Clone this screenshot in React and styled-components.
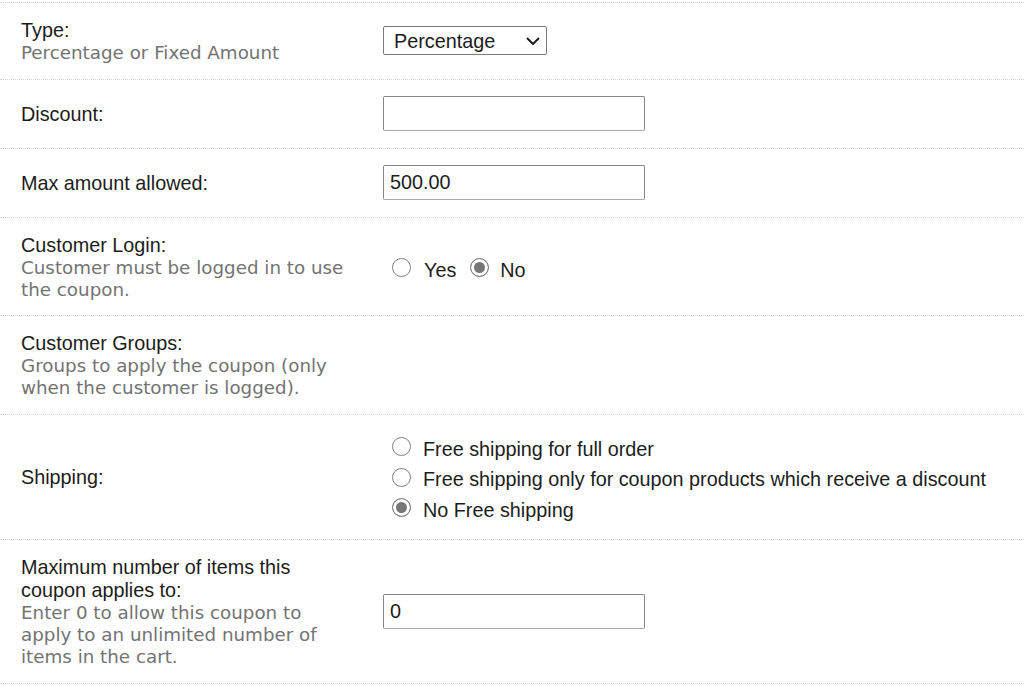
import React, { useState } from "react";
import styled, { createGlobalStyle } from "styled-components";

const GlobalStyle = createGlobalStyle`
  body {
    margin: 0;
    background: #fff;
    font-family: "Liberation Sans", Arial, sans-serif;
    color: #1c1c1c;
  }
`;

const Table = styled.div`
  width: 1024px;
  margin-top: 2px;
  border-top: 1px dotted #d4d4d4;
`;

const Row = styled.div`
  display: grid;
  grid-template-columns: 366px 1fr;
  align-items: center;
  border-bottom: 1px dotted #d4d4d4;
`;

const LabelCell = styled.div`
  padding: 16px 21px 14.5px;
`;

const ControlCell = styled.div`
  padding: 15.5px 0 15.5px 17px;
`;

const Label = styled.div`
  font-size: 19.8px;
  line-height: 23px;
  color: #1c1c1c;
`;

const Hint = styled.div`
  font-family: "DejaVu Sans", Verdana, sans-serif;
  font-size: 18.3px;
  line-height: 22px;
  color: #737373;
`;

const SelectWrap = styled.div`
  position: relative;
  display: inline-block;
  width: 164px;
  height: 29px;
`;

const Select = styled.select`
  appearance: none;
  width: 100%;
  height: 100%;
  box-sizing: border-box;
  border: 1px solid #7a7a7a;
  border-radius: 2px;
  background: #fff;
  padding: 0 0 0 10px;
  font-family: "Liberation Sans", Arial, sans-serif;
  font-size: 19.8px;
  color: #1c1c1c;
  outline: none;
`;

const Chevron = styled.svg`
  position: absolute;
  right: 7px;
  top: 11px;
  pointer-events: none;
`;

const TextInput = styled.input`
  display: block;
  width: 262px;
  height: 35px;
  margin: 1px 0;
  box-sizing: border-box;
  border: 1px solid #858585;
  border-bottom-color: #a8a8a8;
  border-radius: 2px;
  padding: 0 6px;
  font-family: "Liberation Sans", Arial, sans-serif;
  font-size: 19.8px;
  color: #1c1c1c;
  outline: none;
`;

const RadioRow = styled.div`
  display: flex;
  align-items: center;
  gap: 14px;
  padding: 8px 0 0 9px;
`;

const RadioList = styled.div`
  display: flex;
  flex-direction: column;
  padding: 4px 0 0 9px;
  margin-bottom: -2px;
`;

const RadioLabel = styled.label`
  display: flex;
  align-items: center;
  height: 30.5px;
  font-size: 19.8px;
  color: #1c1c1c;
  cursor: pointer;
`;

const Radio = styled.input.attrs({ type: "radio" })`
  appearance: none;
  flex: none;
  width: 19px;
  height: 19px;
  margin: 0 ${(p) => p.$gap}px 5px 0;
  box-sizing: border-box;
  border: 1.5px solid #808080;
  border-radius: 50%;
  background: #fff;

  &:checked {
    background: #767676;
    box-shadow: inset 0 0 0 3px #fff;
  }
`;

function Choice({ name, value, checked, onPick, gap = 12, children }) {
  return (
    <RadioLabel>
      <Radio
        name={name}
        $gap={gap}
        checked={checked}
        onChange={() => onPick(value)}
      />
      {children}
    </RadioLabel>
  );
}

export default function App() {
  const [type, setType] = useState("percentage");
  const [login, setLogin] = useState("no");
  const [shipping, setShipping] = useState("none");

  return (
    <>
      <GlobalStyle />
      <Table>
        <Row>
          <LabelCell>
            <Label>Type:</Label>
            <Hint>Percentage or Fixed Amount</Hint>
          </LabelCell>
          <ControlCell>
            <SelectWrap>
              <Select value={type} onChange={(e) => setType(e.target.value)}>
                <option value="percentage">Percentage</option>
                <option value="fixed">Fixed Amount</option>
              </Select>
              <Chevron width="14" height="8" viewBox="0 0 14 8">
                <path d="M1 1l6 6 6-6" fill="none" stroke="#1c1c1c" strokeWidth="2" />
              </Chevron>
            </SelectWrap>
          </ControlCell>
        </Row>

        <Row>
          <LabelCell>
            <Label>Discount:</Label>
          </LabelCell>
          <ControlCell>
            <TextInput defaultValue="" />
          </ControlCell>
        </Row>

        <Row>
          <LabelCell>
            <Label>Max amount allowed:</Label>
          </LabelCell>
          <ControlCell>
            <TextInput defaultValue="500.00" />
          </ControlCell>
        </Row>

        <Row>
          <LabelCell>
            <Label>Customer Login:</Label>
            <Hint>Customer must be logged in to use the coupon.</Hint>
          </LabelCell>
          <ControlCell>
            <RadioRow>
              <Choice name="login" value="yes" checked={login === "yes"} onPick={setLogin} gap={13}>
                Yes
              </Choice>
              <Choice name="login" value="no" checked={login === "no"} onPick={setLogin} gap={11}>
                No
              </Choice>
            </RadioRow>
          </ControlCell>
        </Row>

        <Row>
          <LabelCell>
            <Label>Customer Groups:</Label>
            <Hint>Groups to apply the coupon (only when the customer is logged).</Hint>
          </LabelCell>
          <ControlCell />
        </Row>

        <Row>
          <LabelCell>
            <Label>Shipping:</Label>
          </LabelCell>
          <ControlCell>
            <RadioList>
              <Choice name="ship" value="full" checked={shipping === "full"} onPick={setShipping}>
                Free shipping for full order
              </Choice>
              <Choice name="ship" value="products" checked={shipping === "products"} onPick={setShipping}>
                Free shipping only for coupon products which receive a discount
              </Choice>
              <Choice name="ship" value="none" checked={shipping === "none"} onPick={setShipping}>
                No Free shipping
              </Choice>
            </RadioList>
          </ControlCell>
        </Row>

        <Row>
          <LabelCell>
            <Label>Maximum number of items this coupon applies to:</Label>
            <Hint>Enter 0 to allow this coupon to apply to an unlimited number of items in the cart.</Hint>
          </LabelCell>
          <ControlCell>
            <TextInput defaultValue="0" />
          </ControlCell>
        </Row>
      </Table>
    </>
  );
}
